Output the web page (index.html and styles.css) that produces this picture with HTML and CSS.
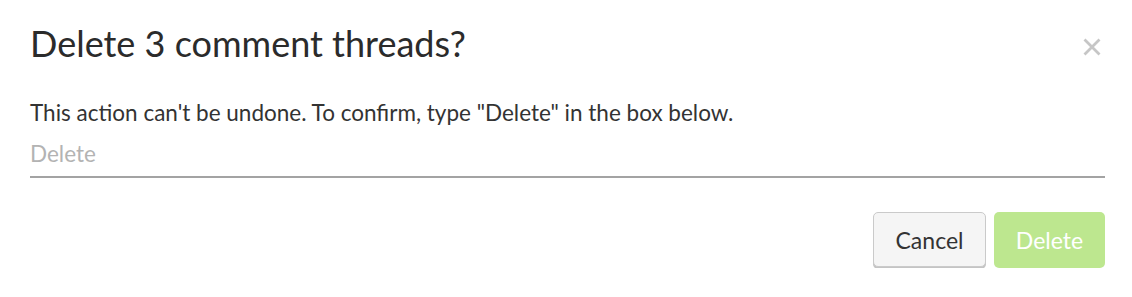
FILE: index.html
```html
<!DOCTYPE html>
<html>
<head>
<meta charset="utf-8">
<link rel="stylesheet" href="styles.css">
</head>
<body>
<div class="dialog">
  <div class="header">
    <h1 class="title">Delete 3 comment threads?</h1>
    <button class="close" aria-label="Close">
      <svg width="18" height="18" viewBox="0 0 18 18"><path d="M1.5 1.5 L16.5 16.5 M16.5 1.5 L1.5 16.5" stroke="#c6c6c6" stroke-width="2.8" fill="none"/></svg>
    </button>
  </div>
  <p class="message">This action can't be undone. To confirm, type "Delete" in the box below.</p>
  <input class="confirm-input" type="text" placeholder="Delete">
  <div class="actions">
    <button class="btn btn-cancel">Cancel</button>
    <button class="btn btn-delete" disabled>Delete</button>
  </div>
</div>
</body>
</html>
```

FILE: styles.css
```css
html, body {
  margin: 0;
  padding: 0;
  background: #fff;
}
body {
  font-family: Lato, "Open Sans", sans-serif;
  color: #333;
}
.dialog {
  padding: 21px 27px 0 30px;
}
.header {
  display: flex;
  align-items: flex-start;
  justify-content: space-between;
}
.title {
  margin: 0;
  font-size: 36px;
  font-weight: 400;
  color: #2b2b2b;
  line-height: 44px;
}
.close {
  border: none;
  background: none;
  padding: 0;
  margin: 17px 4px 0 0;
  display: flex;
  cursor: pointer;
}
.message {
  margin: 34px 0 0 0;
  font-size: 22.5px;
  line-height: 28px;
  color: #333;
}
.confirm-input {
  display: block;
  width: 100%;
  box-sizing: border-box;
  margin: 0;
  border: none;
  border-bottom: 2px solid #a3a3a3;
  padding: 12px 0 9px 0;
  font-family: Lato, sans-serif;
  font-size: 22.5px;
  line-height: 28px;
  height: 51px;
  color: #333;
  outline: none;
}
.confirm-input::placeholder {
  color: #b3b3b3;
}
.actions {
  display: flex;
  justify-content: flex-end;
  gap: 8px;
  margin-top: 34px;
}
.btn {
  font-family: Lato, sans-serif;
  font-size: 23px;
  height: 56px;
  border-radius: 5px;
  padding: 0;
}
.btn-cancel {
  width: 113px;
  height: 55px;
  background: #f5f5f5;
  color: #333;
  border: 1px solid #cacaca;
  box-shadow: 0 2px 0 #c4c4c4;
}
.btn-delete {
  width: 111px;
  background: #bde78f;
  color: #fff;
  border: none;
}
```
